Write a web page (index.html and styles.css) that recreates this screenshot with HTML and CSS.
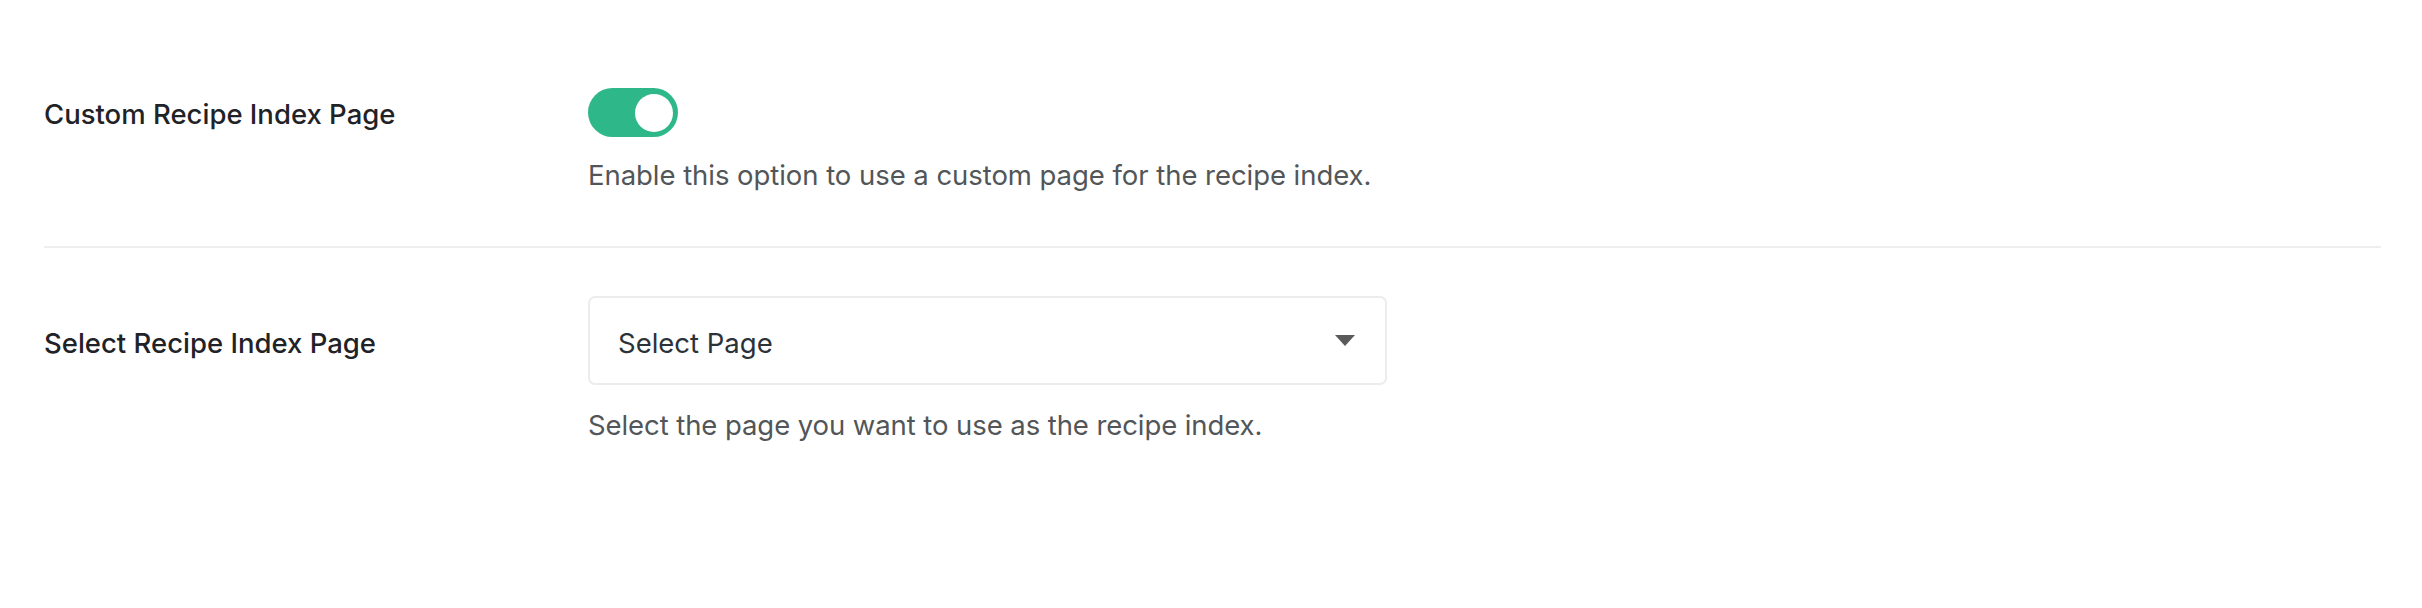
FILE: index.html
```html
<!DOCTYPE html>
<html lang="en">
<head>
<meta charset="utf-8">
<title>Recipe Index Settings</title>
<link rel="stylesheet" href="styles.css">
</head>
<body>
<div class="settings">
  <div class="row row-first">
    <div class="label">Custom Recipe Index Page</div>
    <div class="control">
      <span class="toggle is-on"><span class="knob"></span></span>
    </div>
    <p class="desc">Enable this option to use a custom page for the recipe index.</p>
  </div>
  <div class="row row-second">
    <div class="label">Select Recipe Index Page</div>
    <div class="control">
      <div class="select">
        <span class="select-text">Select Page</span>
        <span class="caret"></span>
      </div>
    </div>
    <p class="desc">Select the page you want to use as the recipe index.</p>
  </div>
</div>
</body>
</html>
```
FILE: styles.css
```css
* { box-sizing: border-box; }
html, body { margin: 0; padding: 0; background: #ffffff; }
body {
  font-family: Inter, "Noto Sans", "Liberation Sans", sans-serif;
  font-size: 27.5px;
  line-height: 38px;
  color: #1e1e1e;
}
.settings {
  padding: 40px 41px 0 44px;
}
.row {
  display: grid;
  grid-template-columns: 544px 1fr;
  grid-template-rows: auto auto;
}
.row-first {
  padding: 48px 0 52px;
  border-bottom: 2px solid #eeeeee;
}
.row-second {
  padding: 48px 0 54px;
}
.label {
  grid-column: 1;
  grid-row: 1;
  align-self: center;
  font-weight: 500;
  color: #1f2328;
  padding-top: 2px;
}
.row-second .label { padding-top: 4px; }
.control {
  grid-column: 2;
  grid-row: 1;
  display: flex;
  align-items: center;
}
.desc {
  grid-column: 2;
  grid-row: 2;
  margin: 19px 0 0;
  color: #525659;
}
.desc:only-of-type { letter-spacing: 0; }
.row-first .desc { letter-spacing: -0.05px; }
.row-second .desc { margin-top: 21px; letter-spacing: -0.08px; }
.toggle {
  display: flex;
  align-items: center;
  justify-content: flex-end;
  width: 90px;
  height: 49px;
  padding: 0 5px;
  border-radius: 25px;
  background: #2eb88a;
}
.knob {
  width: 38px;
  height: 38px;
  border-radius: 50%;
  background: #ffffff;
}
.select {
  width: 799px;
  height: 89px;
  border: 2px solid #ececec;
  border-radius: 7px;
  display: flex;
  align-items: center;
  justify-content: space-between;
  padding: 4px 30px 0 28px;
  background: #ffffff;
}
.select-text {
  color: #2c3338;
}
.caret {
  width: 0;
  height: 0;
  margin-top: -4px;
  border-left: 10px solid transparent;
  border-right: 10px solid transparent;
  border-top: 11px solid #5a5a5a;
}
```
